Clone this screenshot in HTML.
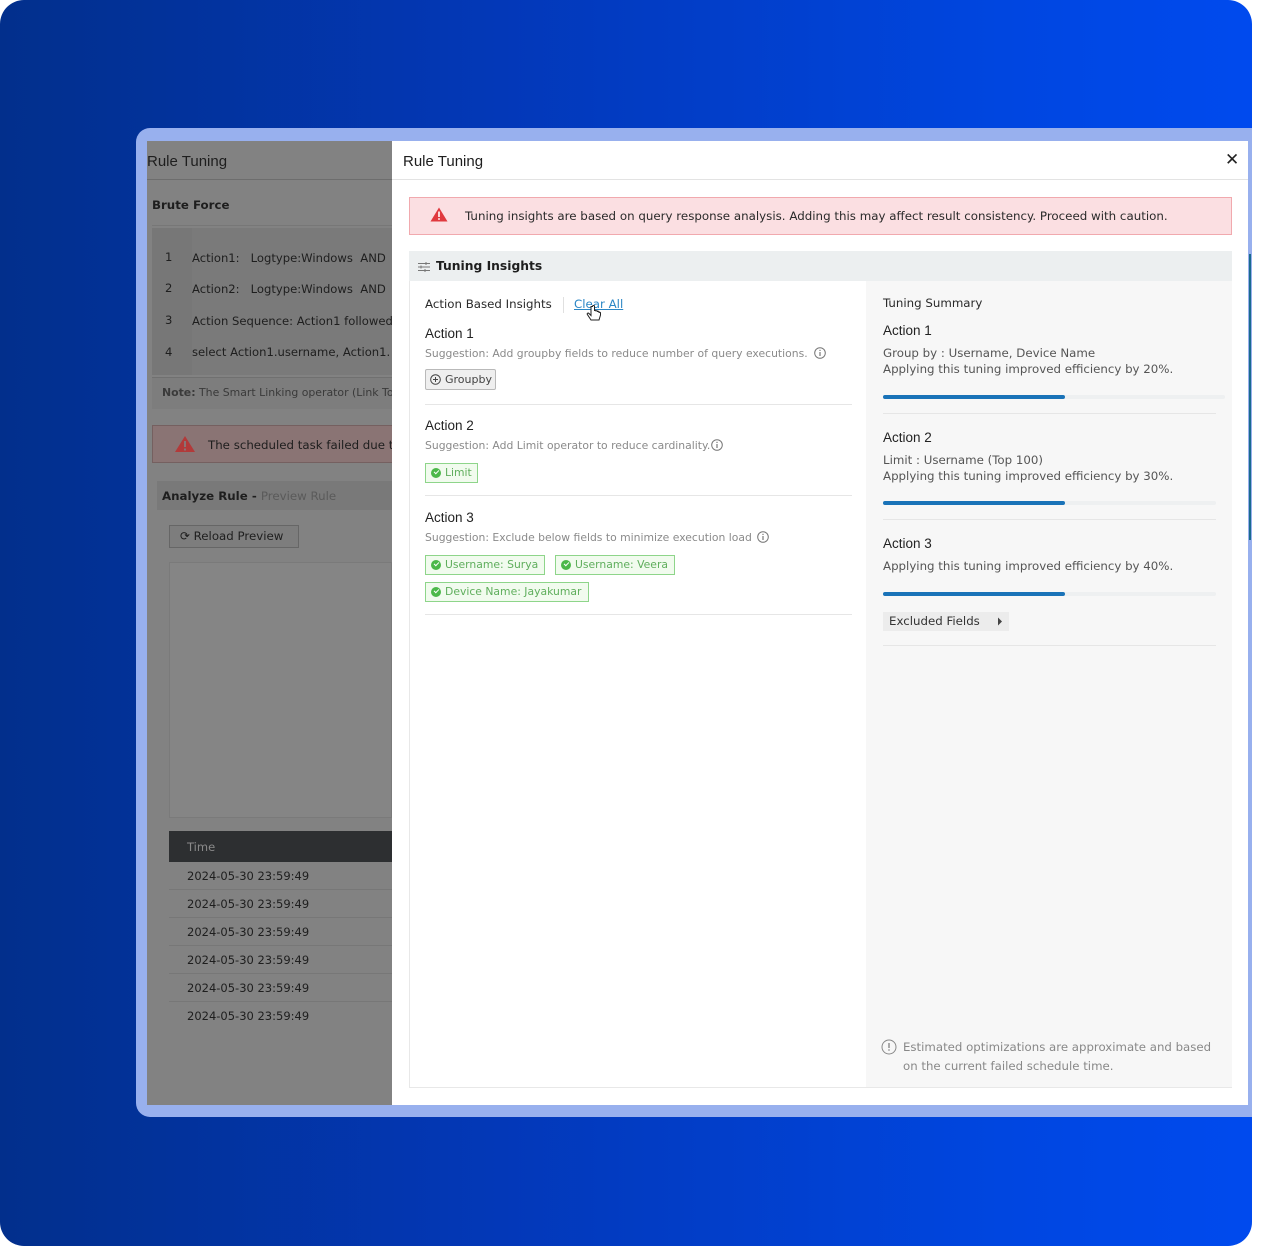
<!DOCTYPE html>
<html><head><meta charset="utf-8">
<style>
*{margin:0;padding:0;box-sizing:border-box}
body{width:1265px;height:1246px;background:#fff;position:relative;overflow:hidden;font-family:"DejaVu Sans","Liberation Sans",sans-serif;}
.abs{position:absolute;white-space:nowrap}
#bg{position:absolute;left:0;top:0;width:1252px;height:1246px;border-radius:24px;background:linear-gradient(90deg,#022f8c 0%,#0338b8 40%,#0046e0 80%,#004aee 100%)}
#frame{position:absolute;left:136px;top:128px;width:1116px;height:989px;background:#98b0ee;border-radius:14px 0 0 14px}
#gray{position:absolute;left:147px;top:141px;width:245px;height:964px;background:#828282;overflow:hidden}
#modal{position:absolute;left:392px;top:141px;width:856px;height:964px;background:#fff}
.lato{font-family:"Liberation Sans",sans-serif}
.sug{font-size:10.8px;color:#8a8a8a}
.h{font-family:"Liberation Sans",sans-serif;font-size:13.5px;color:#222}
.tag{position:absolute;height:20px;border:1px solid #8ed58a;background:#f1fbee;color:#5fae5c;font-size:10.8px;line-height:18px;padding:0 5px 0 19px;white-space:nowrap}
.tag:before{content:"";position:absolute;left:5px;top:4px;width:10px;height:10px;border-radius:50%;background:#4cb84a}
.tag:after{content:"";position:absolute;left:8px;top:6px;width:4px;height:2px;border-left:1.5px solid #fff;border-bottom:1.5px solid #fff;transform:rotate(-45deg)}
.div{position:absolute;height:1px;background:#e6e6e6}
.bar{position:absolute;left:883px;width:342px;height:4px;background:#eef0f1;border-radius:2px}
.bar i{position:absolute;left:0;top:0;width:182px;height:4px;background:#1a73b8;border-radius:2px}
.s{font-size:11.8px;color:#555}
.row{position:absolute;left:22px;width:223px;height:28px;border-bottom:1px solid #777;font-size:11.5px;color:#1e1e1e;padding-left:18px;line-height:28px}
.code{font-size:11.6px;color:#1e1e1e}
</style></head><body>
<div id="bg"></div>
<div id="frame"></div>

<div id="gray">
  <div class="abs lato" style="left:0;top:12px;font-size:15px;color:#1e1e1e">Rule Tuning</div>
  <div style="position:absolute;left:0;top:38px;width:245px;height:1px;background:#6d6d6d"></div>
  <div class="abs" style="left:5px;top:57px;font-size:11.8px;font-weight:bold;color:#1e1e1e">Brute Force</div>
  <div style="position:absolute;left:5px;top:84px;width:240px;height:1px;background:#777"></div>
  <div style="position:absolute;left:5px;top:87px;width:240px;height:147px;background:#7a7a7a"></div>
  <div style="position:absolute;left:5px;top:87px;width:40px;height:147px;background:#777"></div>
  <div class="abs code" style="left:18px;top:109px">1</div>
  <div class="abs code" style="left:45px;top:110px">Action1: &nbsp;&nbsp;Logtype:Windows &nbsp;AND</div>
  <div class="abs code" style="left:18px;top:140px">2</div>
  <div class="abs code" style="left:45px;top:141px">Action2: &nbsp;&nbsp;Logtype:Windows &nbsp;AND</div>
  <div class="abs code" style="left:18px;top:172px">3</div>
  <div class="abs code" style="left:45px;top:173px">Action Sequence: Action1 followed</div>
  <div class="abs code" style="left:18px;top:204px">4</div>
  <div class="abs code" style="left:45px;top:204px">select Action1.username, Action1.</div>
  <div style="position:absolute;left:5px;top:236px;width:240px;height:32px;background:#7d7d7d;border-top:1px solid #707070"></div>
  <div class="abs" style="left:15px;top:245px;font-size:10.9px;color:#3a3a3a"><b>Note:</b> The Smart Linking operator (Link To</div>
  <div style="position:absolute;left:5px;top:284px;width:245px;height:38px;background:#8a7474;border:1px solid #756060"></div>
  <svg class="abs" style="left:27px;top:294px" width="22" height="18" viewBox="0 0 22 18"><path d="M11 1L21 17H1Z" fill="#b23a3a"/><rect x="10" y="6" width="2" height="6" fill="#8a7474"/><rect x="10" y="13.5" width="2" height="2" fill="#8a7474"/></svg>
  <div class="abs" style="left:61px;top:297px;font-size:11.8px;color:#1e1e1e">The scheduled task failed due t</div>
  <div style="position:absolute;left:10px;top:340px;width:235px;height:29px;background:#797979"></div>
  <div class="abs" style="left:15px;top:348px;font-size:11.8px;color:#1e1e1e"><b>Analyze Rule - </b><span style="color:#5a5a5a">Preview Rule</span></div>
  <div style="position:absolute;left:22px;top:384px;width:130px;height:23px;border:1px solid #666;background:#7d7d7d"></div>
  <div class="abs" style="left:33px;top:388px;font-size:11.8px;color:#1e1e1e">&#x27F3; Reload Preview</div>
  <div style="position:absolute;left:22px;top:421px;width:223px;height:256px;border:1px solid #7a7a7a;background:#858585"></div>
  <div style="position:absolute;left:22px;top:690px;width:223px;height:31px;background:#2d2f31"></div>
  <div class="abs" style="left:40px;top:699px;font-size:11.5px;color:#8a8a8a">Time</div>
  <div class="row" style="top:721px">2024-05-30 23:59:49</div>
  <div class="row" style="top:749px">2024-05-30 23:59:49</div>
  <div class="row" style="top:777px">2024-05-30 23:59:49</div>
  <div class="row" style="top:805px">2024-05-30 23:59:49</div>
  <div class="row" style="top:833px">2024-05-30 23:59:49</div>
  <div class="row" style="top:861px;border:none">2024-05-30 23:59:49</div>
</div>

<div id="modal"></div>
<div style="position:absolute;left:392px;top:179px;width:856px;height:1px;background:#e3e3e3"></div>
<div class="abs lato" style="left:403px;top:153px;font-size:15px;color:#1e1e1e">Rule Tuning</div>
<div class="abs" style="left:1225px;top:150px;font-size:17px;font-weight:bold;color:#222">&#x2715;</div>
<div style="position:absolute;left:1249px;top:254px;width:2px;height:286px;background:#1a6a8e"></div>

<div style="position:absolute;left:409px;top:197px;width:823px;height:38px;background:#fbdfe2;border:1px solid #f1a9ae"></div>
<svg class="abs" style="left:430px;top:207px" width="18" height="15" viewBox="0 0 18 15"><path d="M9 0.5L17.5 14.5H0.5Z" fill="#e0393e"/><rect x="8.2" y="4.5" width="1.6" height="5.5" fill="#fff"/><rect x="8.2" y="11.2" width="1.6" height="1.6" fill="#fff"/></svg>
<div class="abs" style="left:465px;top:209px;font-size:11.85px;color:#2a2a2a">Tuning insights are based on query response analysis. Adding this may affect result consistency. Proceed with caution.</div>

<div style="position:absolute;left:409px;top:251px;width:823px;height:837px;border:1px solid #e8e8e8;background:#fff"></div>
<div style="position:absolute;left:409px;top:251px;width:823px;height:30px;background:#eceff0"></div>
<svg class="abs" style="left:418px;top:261px" width="12" height="12" viewBox="0 0 12 12" stroke="#777" stroke-width="1"><path d="M0 2.5H12M0 6H12M0 9.5H12"/><path d="M8 1V4M3 4.5V7.5M7 8V11"/></svg>
<div class="abs" style="left:436px;top:259px;font-size:12.3px;font-weight:bold;color:#1e1e1e">Tuning Insights</div>
<div style="position:absolute;left:866px;top:281px;width:366px;height:806px;background:#f7f7f7"></div>

<div class="abs" style="left:425px;top:297px;font-size:11.8px;color:#2a2a2a">Action Based Insights</div>
<div style="position:absolute;left:563px;top:297px;width:1px;height:16px;background:#e0e0e0"></div>
<div class="abs" style="left:574px;top:297px;font-size:11.8px;color:#2b86c5;text-decoration:underline">Clear All</div>
<svg class="abs" style="left:586px;top:305px" width="16" height="18" viewBox="0 0 16 18"><path d="M5 1.5v9l-2-2c-1-1-2.5 0-1.5 1.2L5 15h8l1.5-5V8c0-1-1.5-1-1.5 0V7c0-1-1.5-1-1.5 0V6.5c0-1-1.5-1-1.5 0V6c0-1-1.5-1-1.5 0V1.5c0-1.3-2-1.3-2 0z" fill="#fff" stroke="#222" stroke-width="1"/></svg>

<div class="abs h" style="left:425px;top:326px">Action 1</div>
<div class="abs sug" style="left:425px;top:347px">Suggestion: Add groupby fields to reduce number of query executions.</div>
<svg class="abs" style="left:814px;top:347px" width="12" height="12" viewBox="0 0 12 12"><circle cx="6" cy="6" r="5.3" fill="none" stroke="#777"/><rect x="5.4" y="5" width="1.2" height="4" fill="#777"/><rect x="5.4" y="2.8" width="1.2" height="1.2" fill="#777"/></svg>
<div style="position:absolute;left:425px;top:369px;width:71px;height:21px;background:#efefef;border:1px solid #b9b9b9;border-radius:2px"></div>
<svg class="abs" style="left:430px;top:374px" width="11" height="11" viewBox="0 0 11 11"><circle cx="5.5" cy="5.5" r="4.8" fill="none" stroke="#444"/><path d="M5.5 3V8M3 5.5H8" stroke="#444"/></svg>
<div class="abs" style="left:445px;top:373px;font-size:11px;color:#444">Groupby</div>
<div class="div" style="left:425px;top:404px;width:427px"></div>

<div class="abs h" style="left:425px;top:418px">Action 2</div>
<div class="abs sug" style="left:425px;top:439px">Suggestion: Add Limit operator to reduce cardinality.</div>
<svg class="abs" style="left:711px;top:439px" width="12" height="12" viewBox="0 0 12 12"><circle cx="6" cy="6" r="5.3" fill="none" stroke="#777"/><rect x="5.4" y="5" width="1.2" height="4" fill="#777"/><rect x="5.4" y="2.8" width="1.2" height="1.2" fill="#777"/></svg>
<div class="tag" style="left:425px;top:463px">Limit</div>
<div class="div" style="left:425px;top:495px;width:427px"></div>

<div class="abs h" style="left:425px;top:510px">Action 3</div>
<div class="abs sug" style="left:425px;top:531px">Suggestion: Exclude below fields to minimize execution load</div>
<svg class="abs" style="left:757px;top:531px" width="12" height="12" viewBox="0 0 12 12"><circle cx="6" cy="6" r="5.3" fill="none" stroke="#777"/><rect x="5.4" y="5" width="1.2" height="4" fill="#777"/><rect x="5.4" y="2.8" width="1.2" height="1.2" fill="#777"/></svg>
<div class="tag" style="left:425px;top:555px;width:120px">Username: Surya</div>
<div class="tag" style="left:555px;top:555px;width:120px">Username: Veera</div>
<div class="tag" style="left:425px;top:582px;width:164px">Device Name: Jayakumar</div>
<div class="div" style="left:425px;top:614px;width:427px"></div>

<div class="abs" style="left:883px;top:296px;font-size:11.8px;color:#2a2a2a">Tuning Summary</div>
<div class="abs h" style="left:883px;top:323px">Action 1</div>
<div class="abs s" style="left:883px;top:346px">Group by : Username, Device Name</div>
<div class="abs s" style="left:883px;top:362px">Applying this tuning improved efficiency by 20%.</div>
<div class="bar" style="top:395px"><i></i></div>
<div class="div" style="left:883px;top:413px;width:333px"></div>

<div class="abs h" style="left:883px;top:430px">Action 2</div>
<div class="abs s" style="left:883px;top:453px">Limit : Username (Top 100)</div>
<div class="abs s" style="left:883px;top:469px">Applying this tuning improved efficiency by 30%.</div>
<div class="bar" style="top:501px;width:333px"><i></i></div>
<div class="div" style="left:883px;top:519px;width:333px"></div>

<div class="abs h" style="left:883px;top:536px">Action 3</div>
<div class="abs s" style="left:883px;top:559px">Applying this tuning improved efficiency by 40%.</div>
<div class="bar" style="top:592px;width:333px"><i></i></div>
<div style="position:absolute;left:883px;top:612px;width:126px;height:19px;background:#ececec"></div>
<div class="abs" style="left:889px;top:614px;font-size:11.8px;color:#333">Excluded Fields</div>
<svg class="abs" style="left:997px;top:617px" width="6" height="9" viewBox="0 0 6 9"><path d="M1 0.5L5 4.5L1 8.5Z" fill="#444"/></svg>
<div class="div" style="left:883px;top:645px;width:333px"></div>

<svg class="abs" style="left:881px;top:1039px" width="16" height="16" viewBox="0 0 16 16"><circle cx="8" cy="8" r="7" fill="none" stroke="#888"/><rect x="7.3" y="4" width="1.4" height="5" fill="#888"/><rect x="7.3" y="10.3" width="1.4" height="1.4" fill="#888"/></svg>
<div class="abs" style="left:903px;top:1040px;font-size:11.75px;color:#888">Estimated optimizations are approximate and based</div>
<div class="abs" style="left:903px;top:1059px;font-size:11.75px;color:#888">on the current failed schedule time.</div>
</body></html>
